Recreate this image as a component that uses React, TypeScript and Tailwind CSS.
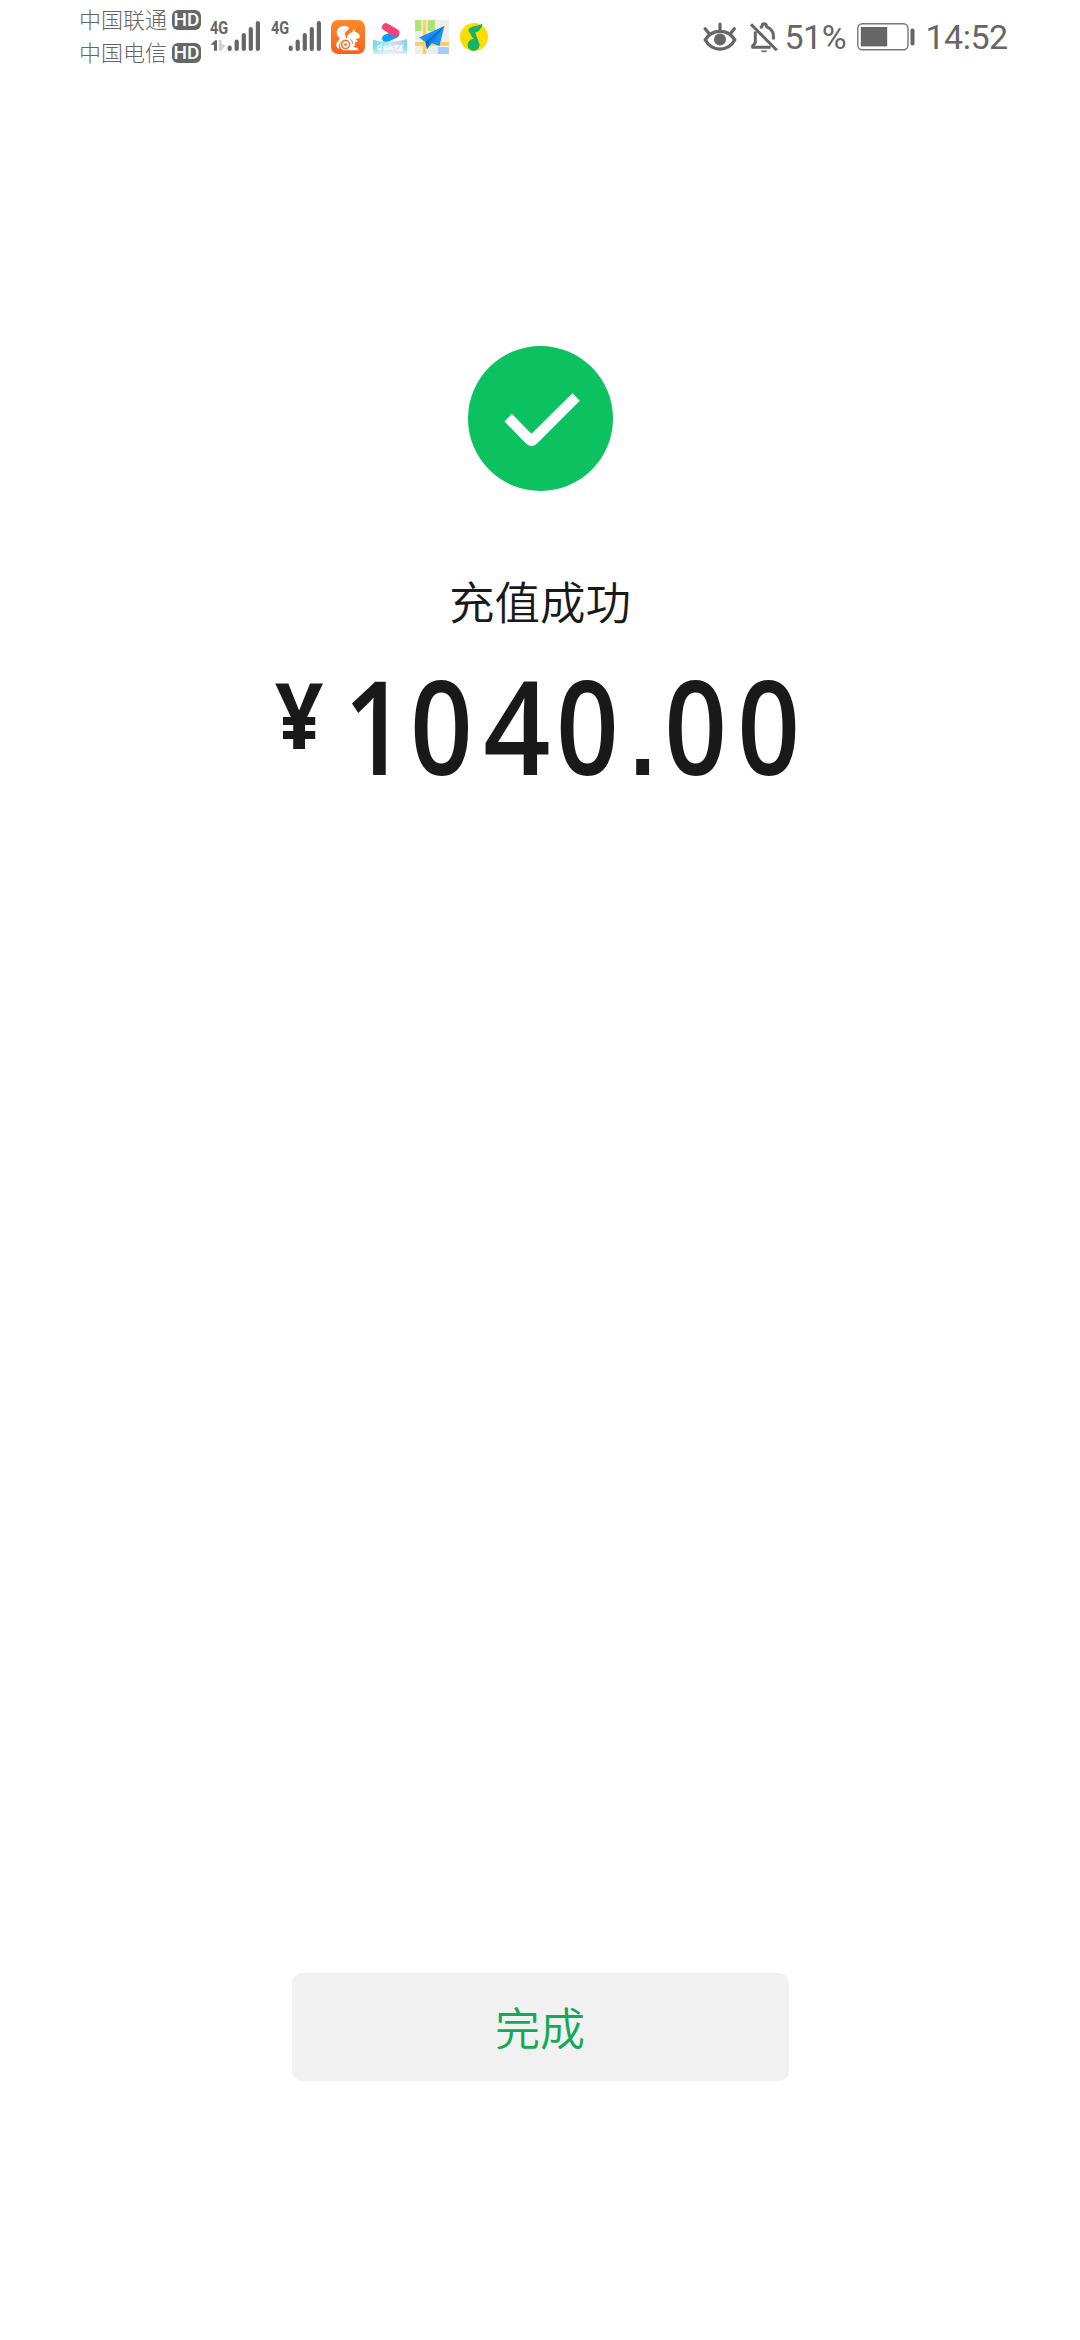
import React from "react";
import { twMerge } from "tailwind-merge";

const Carrier = ({ name }: { name: string }) => (
  <div className="flex h-[33px] items-center gap-[5px]">
    <span className="-mt-[3px] w-[88px] whitespace-nowrap font-['Noto_Sans_CJK_SC',sans-serif] text-[22px] font-light leading-[33px] text-[#666]">
      {name}
    </span>
    <span className="flex h-5 w-[29px] items-center justify-center rounded-[6px] bg-[#666] font-['Roboto',sans-serif] text-[19px] font-medium leading-5 text-white">
      HD
    </span>
  </div>
);

const Signal = ({ data }: { data?: boolean }) => (
  <div className="flex h-[33px] w-[51px] flex-col">
    <span className="h-0 origin-left scale-x-[0.76] font-['Roboto',sans-serif] text-[19px] font-bold leading-[16px] text-[#666]">
      4G
    </span>
    <svg viewBox="0 0 51 33" className="h-[33px] w-[51px] shrink-0">
      <g stroke="#666" strokeWidth="4.2" strokeLinecap="round">
        <path d="M19.7 27.7v1.2M26.7 21.5v7.4M33.8 15v13.9M40.8 9v19.9M47.9 3.2v25.7" />
      </g>
      {data && (
        <>
          <path d="M.5 24.8 5 20.3h2v10.5H4v-6Z" fill="#666" />
          <path d="M8.7 20h2.8v3.4l4 2-4 5.4H8.7Z" fill="#d2d2d2" />
        </>
      )}
    </svg>
  </div>
);

const SquirrelIcon = () => (
  <svg viewBox="0 0 34 34" className="size-[34px]">
    <defs>
      <linearGradient id="uc" x1="0" y1="0" x2="0" y2="1">
        <stop stopColor="#ff8a2a" />
        <stop offset="1" stopColor="#f85f22" />
      </linearGradient>
    </defs>
    <rect width="34" height="34" rx="7" fill="url(#uc)" />
    {/* tail */}
    <path
      d="M18.3 8.6C16.2 4.6 9.6 5.2 7 8.8c-1.8 2.6-1.6 6.2.8 8.2 1.8 1.6.4 3-1.2 4.6-2.4 2.6-1.4 6.2 1.6 7.7-.8-4.6 1-8.2 4.8-9.7 2.4-1 2.6-2 1.4-3.6-1.6-2.2.4-4.8 3.9-7.4Z"
      fill="#fff"
    />
    {/* head and body */}
    <path
      d="M22.3 9.2c1.3.8 1.7 1.7 1.8 2.8 2.6.5 4.2 2 4.7 4 .4 1.4-.3 2.4-1.8 2.6l-2.6.2c1.2.8 2 1.8 2.2 3.2-1 .3-1.9.1-2.6-.4.6 2.4-.1 4.2-1.6 5.6 2.9-.2 4.6.8 5.4 3H12.5c-2.5-1.2-3.6-3-3.4-5.3.4-3.4 3.2-5.4 6.4-6.6 1.5-3 2.4-5.3 6-6.2Z"
      fill="#fff"
    />
    <circle cx="14.6" cy="24.6" r="4" fill="none" stroke="#fa6b24" strokeWidth="1.5" />
    <circle cx="14.6" cy="24.6" r="1.4" fill="#fa6b24" />
    <path d="M19.4 19.5c1.8.8 2.4 2.6 1.8 4.4" fill="none" stroke="#fa6b24" strokeWidth="1" />
  </svg>
);

const VideoIcon = () => (
  <svg viewBox="0 0 34 34" className="size-[34px]">
    <defs>
      <linearGradient id="banner">
        <stop stopColor="#72dcf2" />
        <stop offset=".5" stopColor="#b9ecf5" />
        <stop offset=".75" stopColor="#ddd0f5" />
        <stop offset="1" stopColor="#6fdaf0" />
      </linearGradient>
      <linearGradient id="fade" x1="0" y1="0" x2="0" y2="1">
        <stop offset=".5" stopColor="#fff" stopOpacity="0" />
        <stop offset="1" stopColor="#fff" stopOpacity=".6" />
      </linearGradient>
    </defs>
    <path d="M13 18.5 22.5 14" stroke="#139df1" strokeWidth="7.6" strokeLinecap="round" />
    <path d="m13 7 9.3 5.6" stroke="#fb3f73" strokeWidth="7.8" strokeLinecap="round" />
    <path d="M0 19.5c5 1.8 10 2.3 17 2.1 6-.2 12-.9 17-2.6V32a2 2 0 0 1-2 2H2a2 2 0 0 1-2-2Z" fill="url(#banner)" />
    <path d="M0 19.5h34V32a2 2 0 0 1-2 2H2a2 2 0 0 1-2-2Z" fill="url(#fade)" />
    <path
      d="M9 25.5c-4-1-6 3.5-3 3.5 2 0 3-3 3-3l-2 5M11 28.5c2 0 3-2.5 1.5-2.5s-2.5 4 0 4 3-3.5 4-4l-1 3.5M18 26l-1 4m.5-2 3-2m-2 2 2 2m1-4h4m-2-1-1.5 5m0-3 4-1m0 3 4-4m-3 0 2 4m-5 1h6"
      fill="none"
      stroke="#fff"
      strokeWidth="1.3"
    />
  </svg>
);

const MapIcon = () => (
  <svg viewBox="0 0 34 34" className="size-[34px]">
    <path d="M0 0h34v34H0z" fill="#efede8" />
    <path d="M0 0h20v11H0z" fill="#abe477" />
    <path d="M23 26h11v8H23z" fill="#a5cbff" />
    <path d="M9.5 0v34M0 24h34" stroke="#fff" strokeWidth="6" />
    <path d="M9.5 0v34M0 24h34" stroke="#fbcf66" strokeWidth="4" />
    <path d="m4 17.5 25.3-11.5L24.5 26l-8-3-4.5 6-1.5-7Z" fill="#1690fa" />
    <path d="M29.3 6 10.5 22l1.5 7Z" fill="#0a5fc0" />
    <path d="M29.3 6 16.5 23 12 29l1.8-7.5Z" fill="#0f7fe8" />
  </svg>
);

const MusicIcon = () => (
  <svg viewBox="0 0 30 30" className="ml-[2px] mt-[2px] size-[30px]">
    <circle cx="15" cy="15" r="14" fill="#ffdc00" />
    <path
      d="M23.6 1.2C20 4.4 13.4 3.2 10.2 6.4c-1 1.1-.9 2.3-.2 3.4l4.3 7.1a6 6 0 1 0 6.2 5L16.2 10.6c3.8-1.2 6.2-3.6 7.4-9.4Z"
      fill="#18b36a"
    />
  </svg>
);

const EyeIcon = () => (
  <svg viewBox="0 0 34 30" className="h-[30px] w-[34px]" fill="none" stroke="#666" strokeLinecap="round">
    <path d="M2.2 17.8C9 6.5 25 6.5 31.8 17.8 25 30.2 9 30.2 2.2 17.8Z" strokeWidth="3.4" strokeLinejoin="round" />
    <path d="M17 2v6M2.2 6.8l3.6 4.4M31.3 6.8l-3.6 4.4" strokeWidth="3.2" />
    <circle cx="17" cy="17.5" r="6" fill="#666" stroke="none" />
  </svg>
);

const BellOffIcon = () => (
  <svg viewBox="0 0 28 31" className="ml-[13px] h-[31px] w-7" fill="none" stroke="#666" strokeWidth="3">
    <path d="M1 2.3 26.8 28.2" />
    <path d="M5.3 9.5v11.2L2.6 24v1.2h18" strokeLinejoin="round" />
    <path d="M10 5.8c1-.6 2-.7 2-1.3 0-3.6 4.4-3.6 4.4 0 0 .6 7 1.6 7 9.5v3.5" />
    <path d="M10.7 28.4h6.8c-.8 2.4-6 2.4-6.8 0Z" fill="#666" stroke="none" />
  </svg>
);

const BatteryIcon = () => (
  <svg viewBox="0 0 58 28" className="h-7 w-[58px]">
    <rect x=".8" y=".8" width="50.2" height="26" rx="4.5" fill="none" stroke="#777" strokeWidth="1.4" />
    <path d="M3.8 4h26.4v19.4H3.8z" fill="#666" />
    <rect x="53.5" y="5.5" width="4" height="17" rx="1.8" fill="#666" />
  </svg>
);

const StatusText = ({ className, children }: { className?: string; children: React.ReactNode }) => (
  <span
    className={twMerge(
      "whitespace-nowrap font-['Roboto',sans-serif] text-[34px] font-normal leading-10 tracking-[-0.5px] text-[#666]",
      className,
    )}
  >
    {children}
  </span>
);

const StatusBar = () => (
  <header className="flex h-[74px] w-full items-start pl-[79px]">
    <div className="flex w-[131px] flex-col pt-[3.5px]">
      <Carrier name="中国联通" />
      <Carrier name="中国电信" />
    </div>
    <div className="flex gap-[10px] pt-5">
      <Signal data />
      <Signal />
    </div>
    <div className="ml-[9px] flex gap-2 pt-5">
      <SquirrelIcon />
      <VideoIcon />
      <MapIcon />
      <MusicIcon />
    </div>
    <div className="ml-[213.5px] flex h-[74px] items-center">
      <EyeIcon />
      <BellOffIcon />
      <StatusText className="ml-[7px] w-[72px]">51%</StatusText>
      <BatteryIcon />
      <StatusText className="ml-[11px]">14:52</StatusText>
    </div>
  </header>
);

export default function App() {
  return (
    <main className="flex h-[2340px] w-[1080px] flex-col items-center overflow-hidden bg-white">
      <StatusBar />

      {/* Result */}
      <svg viewBox="0 0 145 145" className="mt-[272px] size-[145px] shrink-0">
        <circle cx="72.5" cy="72.5" r="72.5" fill="#0bc160" />
        <path d="m36.5 75.5 7.3-7.7 19.7 20 41-40.6 7.3 7.6-42 42q-6.3 6.8-12.6 0Z" fill="#fff" />
      </svg>
      <h1 className="mt-[76px] font-['Noto_Sans_CJK_SC',sans-serif] text-[45.5px] font-[350] leading-[66px] text-[#191919]">
        充值成功
      </h1>

      {/* Amount */}
      <div className="mt-[27px] flex h-[140px] w-[530px] shrink-0 items-start font-['Open_Sans',sans-serif] text-[#191919]">
        <span className="mt-[4px] w-[62px] shrink-0 origin-left scale-x-[0.92] text-[92px] font-bold leading-[100px]">
          ¥
        </span>
        <span className="origin-left scale-x-[0.845] whitespace-nowrap text-[130px] font-semibold leading-[130px] tracking-[12px]">
          <span className="ml-[8px] mr-[-8px]">1</span>0
          <span className="inline-block origin-left scale-x-[1.07]">4</span>0
          <span className="ml-[1.5px] mr-[-1.5px] font-['Liberation_Sans',sans-serif] text-[108px] font-bold leading-none">
            .
          </span>
          00
        </span>
      </div>

      <button className="mt-[1173px] flex h-[108px] w-[497px] shrink-0 items-center justify-center rounded-[10px] bg-[#f1f1f1] font-['Noto_Sans_CJK_SC',sans-serif] text-[45px] font-[350] text-[#14a858]">
        完成
      </button>
    </main>
  );
}
